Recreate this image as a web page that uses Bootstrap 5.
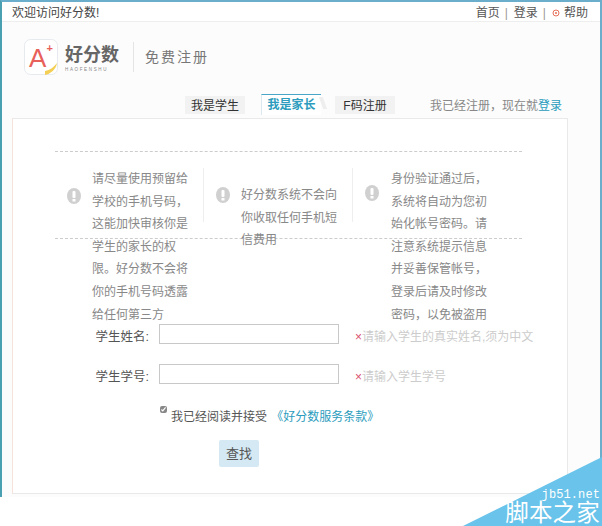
<!doctype html>
<html lang="zh-CN">
<head>
<meta charset="utf-8">
<title>免费注册</title>
<link href="https://cdn.jsdelivr.net/npm/bootstrap@5.3.0/dist/css/bootstrap.min.css" rel="stylesheet">
<style>
html,body{background:#fff;height:526px;overflow:hidden}
body{font:12px/1.2 "Liberation Sans","Noto Sans CJK SC",sans-serif;color:#555;position:relative}
a{text-decoration:none}
.shell{height:497px;background:#fcfcfc;border:solid #6aaecb;border-width:2px 2px 0 2px;border-left-color:#4a9fb0}
.topline{height:20px;background:#fff;border-bottom:1px solid #eee;padding:3px 12px 0 10px;color:#444}
.topline a{color:#555}
.topsep{color:#999;margin:0 6px 0 5px}
.brand{height:72px;padding:17px 0 0 22px}
.logomark{width:34px;height:36px;display:block}
.wordmark{width:56px;margin-left:7px;padding-top:6px}
.wordcn{font-size:18px;font-weight:700;color:#666;line-height:20px;white-space:nowrap}
.worden{font-size:4.5px;letter-spacing:1.65px;color:#888;line-height:7px;margin-top:1px;white-space:nowrap}
.brandrule{width:1px;height:30px;background:#e4e4e4;margin:3px 11px 0 12px}
.brandname{font-size:14px;letter-spacing:2px;color:#777;line-height:36px}
.tabstrip{height:21px;position:relative;z-index:1;padding-left:183px}
.regtab{width:60px;height:18px;line-height:20px;margin-top:2px;text-align:center;background:#f2f2f2;color:#333;display:block;font-size:12px}
.regtab-on{height:21px;margin-top:0;margin-left:16px;background:#fff;color:#2b9cbd;font-weight:700;border-top:1px solid #4aa6c8;border-left:1px solid #dbeaf0;line-height:20px;position:relative}
.regtab-on::after{content:"";position:absolute;left:100%;top:2px;width:4px;height:12px;background:#eee;transform:skewX(20deg)}
.regtab-third{margin-left:14px}
.signed{margin-left:35px;margin-top:3px;color:#888;white-space:nowrap;line-height:18px;font-size:12px}
.signed a,.termlink{color:#2b9cbd}
.panelbox{height:376px;width:556px;margin:3px 0 0 10px;background:#fff;border:1px solid #e9e9e9;border-left-color:#f6e2da;padding-top:32px}
.tips{width:467px;height:88px;margin-left:42px;border-top:1px dashed #ccc;border-bottom:1px dashed #ccc;padding-top:16px}
.tipcol{display:flex;position:relative;color:#888;line-height:22.6px}
.tipcol span{display:block}
.tipone{width:149px;padding-left:12px;border-right:1px solid #eee;height:54px}
.tiptwo{width:149px;padding-left:12px;border-right:1px solid #eee;height:54px}
.tipthree{padding-left:12px}
.tipicon{width:14px;height:16px;flex:none;margin:20px 11px 0 0}
.tiptwo .tipicon{margin-right:11px;margin-top:19px}
.tipone span,.tipthree span{width:98px}
.tipthree .tipicon{margin-top:17px;margin-right:12px}
.tiptwo span{width:99px;margin-top:16px}
.formrow{height:20px;margin-bottom:20px}
.formlabel{width:95px;text-align:right;margin-left:41px;font-size:12.5px;line-height:27px;color:#555;white-space:nowrap}
.forminput{width:180px;height:20px;margin-left:10px;border:1px solid #c8c8c8;border-radius:0;background:#fff;padding:0;display:block}
.hint{margin-left:16px;color:#ccc;white-space:nowrap;line-height:27px;font-size:12px}
.hint b{color:#d9506f;font-weight:400}
.formspace{height:85px}
.agree{margin-left:146px;padding-top:2px;height:24px;line-height:22px;white-space:nowrap;color:#555}
.agree input{width:7px;height:7px;margin:0 4px 0 1px;vertical-align:8px;accent-color:#888}
.termlink{margin-left:1px}
.findbtn{width:40px;height:27px;margin:12px 0 0 206px;background:#d4e9f3;border:0;border-radius:2px;color:#555;font-size:13px;padding:0;display:block}
.stamp{position:absolute;right:0;bottom:0;width:139px;height:69px;display:block}
.stamptext{position:absolute;right:2px;bottom:1px;color:#fff;text-align:right;line-height:1}
.stampen{font:12px "Liberation Mono",monospace;letter-spacing:.1px;display:block}
.stampcn{font-size:23.5px;letter-spacing:.2px;display:block}
</style>
</head>
<body>
<div class="shell">
  <div class="topline d-flex justify-content-between align-items-center">
    <div>欢迎访问好分数!</div>
    <div class="d-flex align-items-center">
      <a href="#">首页</a><span class="topsep">|</span><a href="#">登录</a><span class="topsep">|</span>
      <svg width="8" height="8" viewBox="0 0 8 8" class="me-1"><circle cx="4" cy="4" r="3" fill="none" stroke="#e8705a"/><circle cx="4" cy="4" r="1" fill="#e8705a"/></svg>
      <a href="#">帮助</a>
    </div>
  </div>
  <div class="brand d-flex align-items-start">
    <svg class="logomark" viewBox="0 0 34 36">
      <rect x=".5" y=".5" width="33" height="35" rx="6" fill="#fff" stroke="#e6eaee"/>
      <path d="M21 36c5-1 11-5 12-12-3 4-7 7-12 8z" fill="#f4cf55"/>
      <text x="5" y="28" font-size="26" fill="#e8605a" font-family="Liberation Sans">A</text>
      <text x="22.5" y="13" font-size="11" font-weight="700" fill="#e8605a" font-family="Liberation Sans">+</text>
    </svg>
    <div class="wordmark"><div class="wordcn">好分数</div><div class="worden">HAOFENSHU</div></div>
    <div class="brandrule"></div>
    <div class="brandname">免费注册</div>
  </div>
  <div class="tabstrip d-flex">
    <a class="regtab" href="#">我是学生</a>
    <a class="regtab regtab-on" href="#">我是家长</a>
    <a class="regtab regtab-third" href="#">F码注册</a>
    <div class="signed">我已经注册&#xFF0C;现在就<a href="#">登录</a></div>
  </div>
  <div class="panelbox">
    <div class="tips d-flex">
      <div class="tipcol tipone">
        <svg class="tipicon" viewBox="0 0 14 16"><ellipse cx="7" cy="8" rx="7" ry="8" fill="#d0d0d0"/><rect x="5.5" y="3" width="3" height="7" rx="1" fill="#fff"/><rect x="5.5" y="11" width="3" height="2.5" fill="#fff"/></svg>
        <span>请尽量使用预留给学校的手机号码&#xFF0C;这能加快审核你是学生的家长的权限。好分数不会将你的手机号码透露给任何第三方</span>
      </div>
      <div class="tipcol tiptwo">
        <svg class="tipicon" viewBox="0 0 14 16"><ellipse cx="7" cy="8" rx="7" ry="8" fill="#d0d0d0"/><rect x="5.5" y="3" width="3" height="7" rx="1" fill="#fff"/><rect x="5.5" y="11" width="3" height="2.5" fill="#fff"/></svg>
        <span>好分数系统不会向你收取任何手机短信费用</span>
      </div>
      <div class="tipcol tipthree">
        <svg class="tipicon" viewBox="0 0 14 16"><ellipse cx="7" cy="8" rx="7" ry="8" fill="#d0d0d0"/><rect x="5.5" y="3" width="3" height="7" rx="1" fill="#fff"/><rect x="5.5" y="11" width="3" height="2.5" fill="#fff"/></svg>
        <span>身份验证通过后&#xFF0C;系统将自动为您初始化帐号密码。请注意系统提示信息并妥善保管帐号&#xFF0C;登录后请及时修改密码&#xFF0C;以免被盗用</span>
      </div>
    </div>
    <div class="formspace"></div>
    <div class="formrow d-flex">
      <div class="formlabel">学生姓名:</div><input class="forminput" type="text" aria-label="学生姓名">
      <div class="hint"><b>×</b>请输入学生的真实姓名,须为中文</div>
    </div>
    <div class="formrow d-flex">
      <div class="formlabel">学生学号:</div><input class="forminput" type="text" aria-label="学生学号">
      <div class="hint"><b>×</b>请输入学生学号</div>
    </div>
    <div class="agree"><input type="checkbox" checked aria-label="同意">我已经阅读并接受 <a class="termlink" href="#">《好分数服务条款》</a></div>
    <button class="findbtn" type="button">查找</button>
  </div>
</div>
<svg class="stamp" viewBox="0 0 139 69"><polygon points="0,69 139,0 139,69" fill="#69c3ea"/></svg>
<div class="stamptext"><span class="stampen">jb51.net</span><span class="stampcn">脚本之家</span></div>
<script src="https://cdn.jsdelivr.net/npm/bootstrap@5.3.0/dist/js/bootstrap.bundle.min.js"></script>
</body>
</html>
